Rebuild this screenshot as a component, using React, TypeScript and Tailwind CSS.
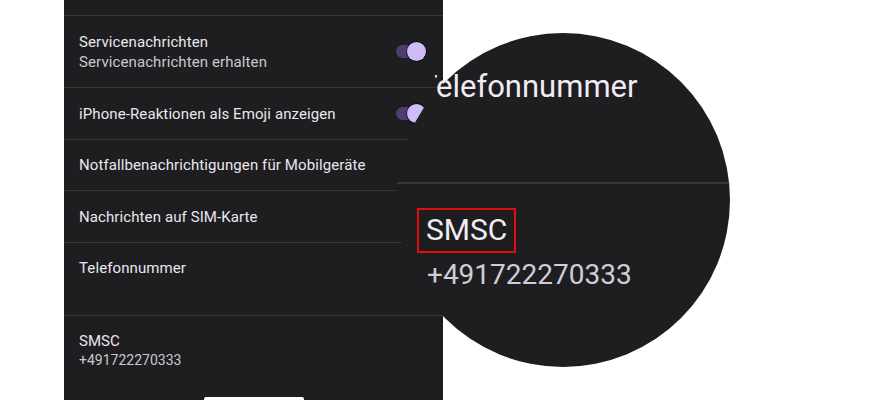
import React from "react";

const Toggle = () => (
  <div className="relative w-[30px] h-[19px] shrink-0">
    <div className="absolute left-0 top-[3px] w-[24px] h-[13px] rounded-full bg-[#4c3f70]" />
    <div className="absolute right-0 top-0 w-[19px] h-[19px] rounded-full bg-[#d0bbf7] shadow-[0_0_0_1px_rgba(0,0,0,0.6)]" />
  </div>
);

const Row = ({
  title,
  sub,
  toggle,
  className = "",
}: {
  title: string;
  sub?: string;
  toggle?: boolean;
  className?: string;
}) => (
  <div className={`flex items-center justify-between pl-[15px] pr-[17px] border-b border-[#39383c] ${className}`}>
    <div className="flex flex-col">
      <span className="text-[15px] leading-[20px] text-[#ebe6ee] tracking-[0.1px]">{title}</span>
      {sub !== undefined && <span className="text-[15px] leading-[20px] text-[#cdc7d2] tracking-[0.1px]">{sub}</span>}
    </div>
    {toggle && <Toggle />}
  </div>
);

export default function App() {
  return (
    <div
      className="relative w-[879px] h-[400px] bg-white overflow-hidden"
      style={{ fontFamily: "Roboto, 'Liberation Sans', sans-serif" }}
    >
      <div className="ml-[64px] w-[379px] h-full bg-[#1e1d20] flex flex-col">
        <div className="h-[16px] border-b border-[#39383c]" />
        <Row className="h-[72px]" title="Servicenachrichten" sub="Servicenachrichten erhalten" toggle />
        <Row className="h-[52px]" title="iPhone-Reaktionen als Emoji anzeigen" toggle />
        <Row className="h-[51px]" title="Notfallbenachrichtigungen für Mobilgeräte" />
        <Row className="h-[52px]" title="Nachrichten auf SIM-Karte" />
        <Row className="h-[73px] items-start pt-[15px]" title="Telefonnummer" />
        <div className="flex-1 pl-[15px] pt-[15px] flex flex-col relative">
          <span className="text-[15px] leading-[20px] text-[#ebe6ee]">SMSC</span>
          <span className="text-[14px] leading-[20px] text-[#cdc7d2] -mt-[1px]">+491722270333</span>
          <div className="absolute left-[140px] bottom-0 w-[100px] h-[3px] bg-white rounded-t-[2px]" />
        </div>
      </div>

      {/* magnifier */}
      <div className="absolute left-[396px] top-[33px] w-[334px] h-[334px] rounded-full bg-[#1e1d20] overflow-hidden">
        <div className="absolute left-0 top-[149px] w-full h-[2px] bg-[#38373b]" />
        <div className="absolute left-[21px] top-[175px] w-[99px] h-[45px] border-2 border-[#e00d0d]" />
        <div className="absolute left-[30px] top-[182px] text-[30px] leading-[30px] text-[#f0ecf3]">SMSC</div>
        <div className="absolute left-[31px] top-[228px] text-[28px] leading-[28px] text-[#d2cbd8]">+491722270333</div>
      </div>
      <div className="absolute left-[435px] top-[70px] w-[260px] h-[34px] overflow-hidden">
        <div className="absolute left-[-16px] top-[2px] text-[31px] leading-[30px] text-[#f0ecf3] whitespace-nowrap">
          Telefonnummer
        </div>
      </div>
    </div>
  );
}
